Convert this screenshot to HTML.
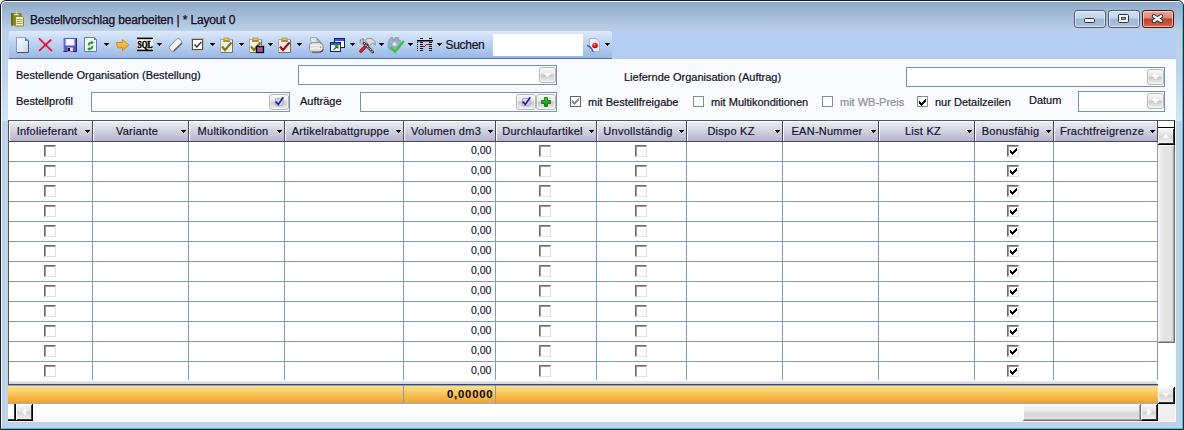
<!DOCTYPE html>
<html><head><meta charset="utf-8">
<style>
*{box-sizing:border-box;margin:0;padding:0}
html,body{width:1184px;height:430px;overflow:hidden;background:#fff;font-family:"Liberation Sans",sans-serif}
.a{position:absolute}
#win{position:absolute;left:0;top:0;width:1184px;height:430px;border:1px solid #1e1e1e;border-radius:6px 6px 0 0;
 background:linear-gradient(#8eaaca 0px,#a4bcd8 15px,#bcd1e8 30px,#bcd3ea 60px,#bcd3ea 430px);overflow:hidden}
#inhl{position:absolute;left:0;top:0;width:1182px;height:428px;border-left:1px solid #eef4fa;border-top:1px solid #eef4fa;border-right:1px solid #22d0f0;border-bottom:1px solid #22d0f0;border-radius:5px 5px 0 0}
.title{position:absolute;left:30px;top:13px;font-size:12px;letter-spacing:-0.15px;color:#100a20;white-space:nowrap;-webkit-text-stroke:0.25px #100a20}
.cbtn{position:absolute;top:10px;width:32px;height:18px;border:1px solid #52607a;border-radius:3px;
 background:linear-gradient(#cfdff0 0,#c3d5ea 7px,#9fb8d4 8px,#a9c0da 17px);box-shadow:inset 0 0 0 1px rgba(255,255,255,.55)}
.cbtn.close{border-color:#4a1414;background:linear-gradient(#e8a898 0,#d98a76 7px,#c0402a 8px,#cf6a52 17px)}
#tbar{position:absolute;left:8px;top:31px;width:605px;height:28px;border-radius:3px 4px 2px 2px;
 background:linear-gradient(#dde9fb 0,#cadcf6 7px,#adc7ec 19px,#9cbae6 26px);border-bottom:1px solid #4a70b8;border-left:1px solid #c4d6f2}
#rebar{position:absolute;left:612px;top:31px;width:564px;height:28px;background:#b3cdf3}
#form{position:absolute;left:8px;top:59px;width:1168px;height:363px;background:#f9fafd}
.lbl{position:absolute;font-size:11px;color:#10101e;white-space:nowrap;line-height:13px;-webkit-text-stroke:0.2px #10101e}
.box{position:absolute;border:1px solid #7592b4;background:#fff}
.gbtn{position:absolute;border:1px solid #b4b4b4;border-radius:3px;background:linear-gradient(#fafafa 0,#e6e6e6 42%,#c9c9c9 50%,#d9d9d9 72%,#f0f0f0 100%);box-shadow:inset 0 0 0 1px rgba(255,255,255,.6)}
.tri{position:absolute;width:0;height:0;border-left:4px solid transparent;border-right:4px solid transparent;border-top:4px solid #fff}
.dd{position:absolute;top:43px;width:0;height:0;border-left:3px solid transparent;border-right:3px solid transparent;border-top:3px solid #000}
.chk{position:absolute;width:11px;height:11px;border:1px solid #8a8a8a;background:#fff}
#grid{position:absolute;left:8px;top:120px;width:1150px;height:265px;background:#fff}
.hd{position:absolute;top:120px;height:22px;border-top:1px solid #555;border-bottom:1px solid #464462;
 background:linear-gradient(#ffffff 0,#ffffff 1px,#ececf2 1px,#b4b3cc 100%);box-shadow:inset 1px 0 0 #fff;font-size:11px;letter-spacing:0.25px;color:#121230;-webkit-text-stroke:0.2px #121230;line-height:21px;white-space:nowrap;overflow:hidden}
.hd span{position:absolute;top:0}
.hdd{position:absolute;top:9px;width:0;height:0;border-left:3px solid transparent;border-right:3px solid transparent;border-top:3px solid #000}
.vl{position:absolute;top:142px;width:1px;height:238px;background:#7d9cbe}
.hl{position:absolute;left:9px;width:1148px;height:1px;background:#7d9cbe}
.cb{position:absolute;width:12px;height:12px;border-top:1px solid #6b6b6b;border-left:1px solid #6b6b6b;border-right:1px solid #e0e0e0;border-bottom:1px solid #e0e0e0;box-shadow:inset 1px 1px 0 #9a9a9a;background:#fff}
.num{position:absolute;font-size:10.5px;color:#0a0a18;line-height:12px;-webkit-text-stroke:0.1px #0a0a18}
</style></head><body>
<div id="win"><div id="inhl"></div></div>
<svg class="a" style="left:8px;top:8px" width="22" height="22" viewBox="8 8 22 22">
 <rect x="11" y="13" width="10.5" height="12.5" fill="#87861a"/>
 <rect x="11" y="13" width="2" height="12.5" fill="#6a6810"/>
 <path d="M15.5 16.5 H22.5 L23.5 17.5 V26 H15.5 Z" fill="#f6f2cc" stroke="#8c8828"/>
 <rect x="16.5" y="19" width="6" height="1" fill="#a8a440"/><rect x="16.5" y="21" width="6" height="1" fill="#a8a440"/><rect x="16.5" y="23" width="6" height="1" fill="#a8a440"/>
 <rect x="16" y="11" width="1.2" height="3" fill="#d8d49a"/><rect x="14" y="14" width="5" height="1.2" fill="#e6e2b0"/>
</svg>
<div class="title">Bestellvorschlag bearbeiten | * Layout 0</div>
<div class="cbtn" style="left:1074px"></div><div class="cbtn" style="left:1108px"></div><div class="cbtn close" style="left:1142px"></div>
<svg class="a" style="left:1070px;top:6px" width="110" height="26" viewBox="1070 6 110 26">
<rect x="1084.5" y="18.5" width="10" height="4" rx="1.2" fill="#f4f4f4" stroke="#2c3444"/>
<rect x="1118.5" y="14.5" width="10" height="8" rx="1" fill="#f4f4f4" stroke="#2c3444"/>
<rect x="1121.5" y="17.5" width="4" height="2" fill="#8ea6c4" stroke="#2c3444" stroke-width="0.8"/>
<path d="M1154 16.2 L1161 21 M1161 16.2 L1154 21" stroke="#2e2a3a" stroke-width="4.4" stroke-linecap="round"/>
<path d="M1154 16.2 L1161 21 M1161 16.2 L1154 21" stroke="#f6f6f6" stroke-width="2.6" stroke-linecap="round"/>
</svg>
<div id="tbar"></div><div id="rebar"></div><div id="form"></div>
<div class="a" style="left:2px;top:68px;width:6px;height:53px;background:linear-gradient(rgba(212,227,243,0),#d6e5f4)"></div><div class="a" style="left:1176px;top:68px;width:6px;height:53px;background:linear-gradient(rgba(212,227,243,0),#d6e5f4)"></div>
<svg class="a" style="left:0;top:0" width="620" height="60" viewBox="0 0 620 60" shape-rendering="geometricPrecision">
<defs>
<linearGradient id="gpage" x1="0" y1="0" x2="1" y2="1"><stop offset="0" stop-color="#ffffff"/><stop offset="1" stop-color="#c8d4f0"/></linearGradient>
<linearGradient id="gorange" x1="0" y1="0" x2="0" y2="1"><stop offset="0" stop-color="#ffd27a"/><stop offset="1" stop-color="#f09a18"/></linearGradient>
<radialGradient id="gball" cx="0.4" cy="0.35" r="0.6"><stop offset="0" stop-color="#ffb0b0"/><stop offset="0.4" stop-color="#ff2020"/><stop offset="1" stop-color="#b00000"/></radialGradient>
<linearGradient id="gprint" x1="0" y1="0" x2="0" y2="1"><stop offset="0" stop-color="#f4f4f4"/><stop offset="1" stop-color="#9a9a9a"/></linearGradient>
</defs>
<path d="M16.5 37.5 H25.5 L28.5 40.5 V52.5 H16.5 Z" fill="url(#gpage)" stroke="#8b9cc4"/>
<path d="M28.5 40.5 V52.5 H17" fill="none" stroke="#505050"/>
<path d="M25 37.5 L28.5 41 H25 Z" fill="#3c8ce8"/>
<path d="M39.5 38.8 L51.5 50.6 M50.8 40 L39.6 50.4" stroke="#e41432" stroke-width="1.8" stroke-linecap="round"/>
<rect x="63" y="38" width="14" height="14" fill="#5656cc"/>
<rect x="63" y="38" width="1.2" height="14" fill="#9a9ae8"/>
<path d="M76.5 38 V51.5 H63.5" fill="none" stroke="#24247a"/>
<rect x="65.5" y="39" width="9" height="6.5" fill="#f4f4f4"/><rect x="66" y="39.5" width="6" height="3" fill="#ffffff"/>
<rect x="67" y="47.5" width="6" height="4" fill="#dcdcf0"/><rect x="67.5" y="48" width="2.5" height="3" fill="#101010"/>
<path d="M84.5 37.5 H94.5 L96.5 39.5 V51.5 H84.5 Z" fill="#f4f6fc" stroke="#6c78b0"/>
<path d="M94 37.5 L96.5 40 H94 Z" fill="#4080e0"/>
<path d="M87.8 45.5 C87.6 42.8 89.2 41.6 91.4 41.8 V40.4 L93.8 42.6 L91.4 44.8 V43.6 C90.2 43.5 89.6 44.3 89.7 45.5 Z" fill="#10a020"/>
<path d="M93.2 46 C93.4 48.7 91.8 49.9 89.6 49.7 V51.1 L87.2 48.9 L89.6 46.7 V47.9 C90.8 48 91.4 47.2 91.3 46 Z" fill="#10a020"/>
<rect x="104" y="43" width="5" height="1" fill="#000"/><rect x="105" y="44" width="3" height="1" fill="#000"/><rect x="106" y="45" width="1" height="1" fill="#000"/>
<path d="M116.5 42.5 H122.5 V39.5 L128.8 45 L122.5 50.8 V47.8 H117.5 Z" fill="url(#gorange)" stroke="#d8890c" stroke-width="1"/>
<rect x="137" y="38" width="16" height="13" fill="#fff"/>
<rect x="137" y="37.6" width="16" height="1.6" fill="#000"/><rect x="137" y="49.6" width="16" height="1.6" fill="#000"/>
<text x="145" y="48" text-anchor="middle" font-family="Liberation Serif" font-weight="bold" font-size="9.5" textLength="15" lengthAdjust="spacingAndGlyphs" fill="#000" stroke="#000" stroke-width="0.6">SQL</text>
<rect x="157" y="43" width="5" height="1" fill="#000"/><rect x="158" y="44" width="3" height="1" fill="#000"/><rect x="159" y="45" width="1" height="1" fill="#000"/>
<g transform="rotate(-45 175.6 45)"><rect x="168.6" y="41.6" width="14" height="7" rx="2.5" fill="#f4f4f4" stroke="#8c8c8c" stroke-width="0.9"/><path d="M170 48 H181.5" stroke="#5c5c5c" stroke-width="1.3"/><path d="M170.5 41.8 H176" stroke="#4a86f0" stroke-width="0.9"/></g>
<rect x="191.5" y="38.5" width="12" height="12" fill="#fff" stroke="#b8b8b8"/>
<rect x="192.5" y="39.5" width="10" height="10" fill="#fff" stroke="#505050"/>
<path d="M194.5 44.5 L196.8 47 L201.3 42" fill="none" stroke="#303030" stroke-width="1.4"/>
<rect x="210" y="43" width="5" height="1" fill="#000"/><rect x="211" y="44" width="3" height="1" fill="#000"/><rect x="212" y="45" width="1" height="1" fill="#000"/>
<rect x="220.5" y="39.5" width="12" height="13" fill="#f4f2e6" stroke="#a8a8a0"/><path d="M221 52.5 H232.5 V40" fill="none" stroke="#707070"/><rect x="224" y="38" width="5" height="3" fill="#f0c050" stroke="#a88020" stroke-width="0.6"/><rect x="223" y="40.6" width="7" height="1" fill="#6a6a40"/><path d="M222 46.5 L225 50 L231.5 42.5" fill="none" stroke="#7a7a10" stroke-width="2.2"/>
<rect x="239" y="43" width="5" height="1" fill="#000"/><rect x="240" y="44" width="3" height="1" fill="#000"/><rect x="241" y="45" width="1" height="1" fill="#000"/>
<rect x="249.5" y="39.5" width="12" height="13" fill="#f4f2e6" stroke="#a8a8a0"/><path d="M250 52.5 H261.5 V40" fill="none" stroke="#707070"/><rect x="253" y="38" width="5" height="3" fill="#f0c050" stroke="#a88020" stroke-width="0.6"/><rect x="252" y="40.6" width="7" height="1" fill="#6a6a40"/><path d="M251 46.5 L254 50 L260.5 42.5" fill="none" stroke="#7a7a10" stroke-width="2.2"/>
<rect x="256.5" y="46.5" width="7" height="6" fill="#b050a8" stroke="#000" stroke-width="1.3"/>
<rect x="268" y="43" width="5" height="1" fill="#000"/><rect x="269" y="44" width="3" height="1" fill="#000"/><rect x="270" y="45" width="1" height="1" fill="#000"/>
<rect x="278.5" y="39.5" width="12" height="13" fill="#f8e8e8" stroke="#a8a8a0"/><path d="M279 52.5 H290.5 V40" fill="none" stroke="#707070"/><rect x="282" y="38" width="5" height="3" fill="#f0c050" stroke="#a88020" stroke-width="0.6"/><rect x="281" y="40.6" width="7" height="1" fill="#6a6a40"/><path d="M280 46.5 L283 50 L289.5 42.5" fill="none" stroke="#901818" stroke-width="2.2"/>
<rect x="297" y="43" width="5" height="1" fill="#000"/><rect x="298" y="44" width="3" height="1" fill="#000"/><rect x="299" y="45" width="1" height="1" fill="#000"/>
<path d="M310.5 37.5 H316.5 L317.5 43 H311 Z" fill="#d6e6fa" stroke="#a0a4b0" stroke-width="0.9"/>
<path d="M317 38.5 L322.5 44.5" stroke="#5a5e66" stroke-width="1"/>
<path d="M309.5 45 Q310.5 42.5 313 42.5 H319.5 Q322.8 43.5 323.2 46.5 V49.5 Q322.5 52.8 318.5 52.8 H313.5 Q309.6 52 309.5 49.5 Z" fill="#dcdcdc" stroke="#8a8a8a" stroke-width="0.9"/>
<path d="M310.5 45.5 Q316 44.2 322 46" fill="none" stroke="#ffffff" stroke-width="1"/><path d="M310.5 48.5 Q316 47.2 322.5 49" fill="none" stroke="#fafafa" stroke-width="0.9"/>
<path d="M312 52 H320 Q322.5 51.5 323 49.5" fill="none" stroke="#3c3c3c" stroke-width="1.2"/>
<rect x="320" y="46.5" width="1.2" height="1.2" fill="#40b040"/>
<rect x="334.5" y="38.5" width="10" height="9" fill="#f8f8f8" stroke="#1c1c6c"/>
<rect x="335" y="39" width="9" height="2" fill="#3058d8"/>
<rect x="330.5" y="42.5" width="10" height="9" fill="#fbfbfb" stroke="#1c1c6c"/>
<rect x="331" y="43" width="9" height="2" fill="#3058d8"/>
<path d="M333.5 50 L337.5 46 M335 46 H337.8 V48.8" fill="none" stroke="#188018" stroke-width="1.3"/>
<rect x="350" y="43" width="5" height="1" fill="#000"/><rect x="351" y="44" width="3" height="1" fill="#000"/><rect x="352" y="45" width="1" height="1" fill="#000"/>
<path d="M365 40.5 L368 38.2 Q372.5 37.6 375 41.5 L375.5 44.8 L372.5 43.2 L369.5 45.5 Z" fill="#dadada" stroke="#808080" stroke-width="0.8"/>
<path d="M360.8 51.2 L367 45" stroke="#8a0a10" stroke-width="3.2" stroke-linecap="round"/>
<path d="M360.8 51.2 L367 45" stroke="#e4202a" stroke-width="1.8" stroke-linecap="round"/>
<path d="M360.2 40 Q359.4 43 361.8 44.2 Q363.5 44.8 365 43.5 L363.2 41.6 L364 39 Q361.8 38.6 360.2 40 Z" fill="#c8c8c8" stroke="#707070" stroke-width="0.7"/>
<path d="M364 43.2 L372.8 52" stroke="#3c3c3c" stroke-width="2.6" stroke-linecap="round"/>
<path d="M364 43.2 L372.8 52" stroke="#f0f0f0" stroke-width="1.1" stroke-dasharray="1.1 1.1"/>
<rect x="379" y="43" width="5" height="1" fill="#000"/><rect x="380" y="44" width="3" height="1" fill="#000"/><rect x="381" y="45" width="1" height="1" fill="#000"/>
<path d="M390.5 37.5 H393 V38.8 H395.5 V37.5 H398.5 V40 H400.5 V47 H399 V49.5 H396 V50.5 H391 V49.5 H389 V47.5 H388 V41.5 H389 V39.5 H390.5 Z" fill="#96abc4" stroke="#8198b4" stroke-width="0.6"/>
<path d="M389 42 H400" stroke="#a8bcd2" stroke-width="1"/>
<circle cx="394.6" cy="44.2" r="1.9" fill="#dfe8f2"/>
<path d="M390.8 47.2 L395 51.8 L403.8 41" fill="none" stroke="#36c336" stroke-width="2.1"/>
<rect x="408" y="43" width="5" height="1" fill="#000"/><rect x="409" y="44" width="3" height="1" fill="#000"/><rect x="410" y="45" width="1" height="1" fill="#000"/>
<rect x="417" y="40" width="16" height="1.5" fill="#000"/>
<rect x="420" y="38" width="3" height="1" fill="#000"/><rect x="429" y="38" width="3" height="1" fill="#000"/>
<rect x="417" y="42" width="1" height="1" fill="#000"/><rect x="420" y="42" width="3" height="1" fill="#000"/><rect x="429" y="42" width="3" height="1" fill="#000"/>
<rect x="417" y="44" width="1" height="1" fill="#000"/><rect x="420" y="44" width="3" height="1" fill="#000"/><rect x="429" y="44" width="3" height="1" fill="#000"/>
<rect x="417" y="46" width="1" height="1" fill="#000"/><rect x="420" y="46" width="3" height="1" fill="#000"/><rect x="429" y="46" width="3" height="1" fill="#000"/>
<rect x="417" y="48" width="1" height="1" fill="#000"/><rect x="420" y="48" width="3" height="1" fill="#000"/><rect x="429" y="48" width="3" height="1" fill="#000"/>
<rect x="417" y="50" width="1" height="1" fill="#000"/><rect x="420" y="50" width="3" height="1" fill="#000"/><rect x="429" y="50" width="3" height="1" fill="#000"/>
<rect x="423" y="46" width="2" height="1" fill="#e00000"/><rect x="425" y="45" width="1" height="1" fill="#e00000"/><rect x="426" y="44" width="3" height="1" fill="#e00000"/>
<rect x="437" y="43" width="5" height="1" fill="#000"/><rect x="438" y="44" width="3" height="1" fill="#000"/><rect x="439" y="45" width="1" height="1" fill="#000"/>
<path d="M589.5 38.5 H596 L599.5 42 V51.5 H589.5 Z" fill="#eef0f6" stroke="#a8b0c8"/>
<path d="M587 45.5 Q591 46 593 51.8" fill="none" stroke="#2a60d8" stroke-width="1.6"/>
<circle cx="595" cy="45.5" r="2.8" fill="url(#gball)"/>
<rect x="605" y="43" width="5" height="1" fill="#000"/><rect x="606" y="44" width="3" height="1" fill="#000"/><rect x="607" y="45" width="1" height="1" fill="#000"/>
</svg>
<div class="lbl" style="left:445.5px;top:39px;font-size:12px;letter-spacing:-0.3px">Suchen</div>
<div class="a" style="left:493px;top:34px;width:90px;height:22px;background:#fff"></div>
<div class="lbl" style="left:16px;top:69px">Bestellende Organisation (Bestellung)</div>
<div class="box" style="left:298px;top:65px;width:259px;height:20px"></div>
<div class="gbtn" style="left:539px;top:67px;width:17px;height:16px"></div>
<div class="lbl" style="left:624px;top:71px">Liefernde Organisation (Auftrag)</div>
<div class="box" style="left:906px;top:67px;width:259px;height:20px"></div>
<div class="gbtn" style="left:1147px;top:69px;width:17px;height:16px"></div>
<div class="lbl" style="left:16px;top:95px">Bestellprofil</div>
<div class="box" style="left:91px;top:92px;width:199px;height:20px"></div>
<div class="gbtn" style="left:269px;top:94px;width:20px;height:16px"></div>
<div class="lbl" style="left:300px;top:95px">Aufträge</div>
<div class="box" style="left:360px;top:92px;width:197px;height:20px"></div>
<div class="gbtn" style="left:516px;top:94px;width:20px;height:16px"></div>
<div class="gbtn" style="left:536px;top:94px;width:20px;height:16px"></div>
<div class="chk" style="left:570px;top:96px;border-color:#646464"></div>
<div class="lbl" style="left:588px;top:96px">mit Bestellfreigabe</div>
<div class="chk" style="left:693px;top:96px"></div>
<div class="lbl" style="left:711px;top:96px">mit Multikonditionen</div>
<div class="chk" style="left:822px;top:96px"></div>
<div class="lbl" style="left:840px;top:96px;color:#8d8d8d;-webkit-text-stroke:0.2px #8d8d8d">mit WB-Preis</div>
<div class="chk" style="left:917px;top:96px"></div>
<div class="lbl" style="left:935px;top:96px">nur Detailzeilen</div>
<div class="lbl" style="left:1029px;top:94px">Datum</div>
<div class="box" style="left:1078px;top:91px;width:87px;height:21px"></div>
<div class="gbtn" style="left:1147px;top:93px;width:17px;height:16px"></div>
<svg class="a" style="left:0;top:60px" width="1184" height="60" viewBox="0 60 1184 60">
<defs><linearGradient id="gplus" x1="0" y1="0" x2="0" y2="1"><stop offset="0" stop-color="#40c840"/><stop offset="1" stop-color="#108a10"/></linearGradient></defs>
<path d="M543.5 73 H551.5 L547.5 77.3 Z" fill="#ffffff"/>
<path d="M1151.5 75 H1159.5 L1155.5 79.3 Z" fill="#ffffff"/>
<path d="M1151.5 99 H1159.5 L1155.5 103.3 Z" fill="#ffffff"/>
<rect x="275.5" y="98.3" width="7.5" height="7.5" rx="1" fill="#d4d4ea" stroke="#9a9ac8" stroke-width="0.8"/>
<path d="M275.6 101.5 L278.3 104.4 L283.3 97.3" fill="none" stroke="#1c1c98" stroke-width="1.6"/>
<rect x="522.5" y="98.3" width="7.5" height="7.5" rx="1" fill="#d4d4ea" stroke="#9a9ac8" stroke-width="0.8"/>
<path d="M522.6 101.5 L525.3 104.4 L530.3 97.3" fill="none" stroke="#1c1c98" stroke-width="1.6"/>
<path d="M544.5 97.5 H547.5 V100.5 H550.5 V103.5 H547.5 V106.5 H544.5 V103.5 H541.5 V100.5 H544.5 Z" fill="url(#gplus)" stroke="#0c700c" stroke-width="0.8"/>

</svg>
<div id="grid"></div>
<div class="a" style="left:8px;top:120px;width:1px;height:264px;background:#555"></div>
<div class="hd" style="left:9px;width:84px;border-right:1px solid #464462"><span style="left:0;width:76px;text-align:center">Infolieferant</span><svg class="a" style="left:76px;top:9px" width="5" height="3"><rect x="0" y="0" width="5" height="1"/><rect x="1" y="1" width="3" height="1"/><rect x="2" y="2" width="1" height="1"/></svg></div>
<div class="hd" style="left:93px;width:96px;border-right:1px solid #464462"><span style="left:0;width:88px;text-align:center">Variante</span><svg class="a" style="left:88px;top:9px" width="5" height="3"><rect x="0" y="0" width="5" height="1"/><rect x="1" y="1" width="3" height="1"/><rect x="2" y="2" width="1" height="1"/></svg></div>
<div class="hd" style="left:189px;width:96px;border-right:1px solid #464462"><span style="left:0;width:88px;text-align:center">Multikondition</span><svg class="a" style="left:88px;top:9px" width="5" height="3"><rect x="0" y="0" width="5" height="1"/><rect x="1" y="1" width="3" height="1"/><rect x="2" y="2" width="1" height="1"/></svg></div>
<div class="hd" style="left:285px;width:119px;border-right:1px solid #464462"><span style="left:0;width:111px;text-align:center">Artikelrabattgruppe</span><svg class="a" style="left:111px;top:9px" width="5" height="3"><rect x="0" y="0" width="5" height="1"/><rect x="1" y="1" width="3" height="1"/><rect x="2" y="2" width="1" height="1"/></svg></div>
<div class="hd" style="left:404px;width:92px;border-right:1px solid #464462"><span style="left:0;width:84px;text-align:center">Volumen dm3</span><svg class="a" style="left:84px;top:9px" width="5" height="3"><rect x="0" y="0" width="5" height="1"/><rect x="1" y="1" width="3" height="1"/><rect x="2" y="2" width="1" height="1"/></svg></div>
<div class="hd" style="left:496px;width:101px;border-right:1px solid #464462"><span style="left:0;width:93px;text-align:center">Durchlaufartikel</span><svg class="a" style="left:93px;top:9px" width="5" height="3"><rect x="0" y="0" width="5" height="1"/><rect x="1" y="1" width="3" height="1"/><rect x="2" y="2" width="1" height="1"/></svg></div>
<div class="hd" style="left:597px;width:90px;border-right:1px solid #464462"><span style="left:0;width:82px;text-align:center">Unvollständig</span><svg class="a" style="left:82px;top:9px" width="5" height="3"><rect x="0" y="0" width="5" height="1"/><rect x="1" y="1" width="3" height="1"/><rect x="2" y="2" width="1" height="1"/></svg></div>
<div class="hd" style="left:687px;width:96px;border-right:1px solid #464462"><span style="left:0;width:88px;text-align:center">Dispo KZ</span><svg class="a" style="left:88px;top:9px" width="5" height="3"><rect x="0" y="0" width="5" height="1"/><rect x="1" y="1" width="3" height="1"/><rect x="2" y="2" width="1" height="1"/></svg></div>
<div class="hd" style="left:783px;width:96px;border-right:1px solid #464462"><span style="left:0;width:88px;text-align:center">EAN-Nummer</span><svg class="a" style="left:88px;top:9px" width="5" height="3"><rect x="0" y="0" width="5" height="1"/><rect x="1" y="1" width="3" height="1"/><rect x="2" y="2" width="1" height="1"/></svg></div>
<div class="hd" style="left:879px;width:96px;border-right:1px solid #464462"><span style="left:0;width:88px;text-align:center">List KZ</span><svg class="a" style="left:88px;top:9px" width="5" height="3"><rect x="0" y="0" width="5" height="1"/><rect x="1" y="1" width="3" height="1"/><rect x="2" y="2" width="1" height="1"/></svg></div>
<div class="hd" style="left:975px;width:79px;border-right:1px solid #464462"><span style="left:0;width:71px;text-align:center">Bonusfähig</span><svg class="a" style="left:71px;top:9px" width="5" height="3"><rect x="0" y="0" width="5" height="1"/><rect x="1" y="1" width="3" height="1"/><rect x="2" y="2" width="1" height="1"/></svg></div>
<div class="hd" style="left:1054px;width:104px;border-right:1px solid #464462"><span style="left:0;width:96px;text-align:center">Frachtfreigrenze</span><svg class="a" style="left:96px;top:9px" width="5" height="3"><rect x="0" y="0" width="5" height="1"/><rect x="1" y="1" width="3" height="1"/><rect x="2" y="2" width="1" height="1"/></svg></div>
<div class="vl" style="left:92px"></div>
<div class="vl" style="left:188px"></div>
<div class="vl" style="left:284px"></div>
<div class="vl" style="left:403px"></div>
<div class="vl" style="left:495px"></div>
<div class="vl" style="left:596px"></div>
<div class="vl" style="left:686px"></div>
<div class="vl" style="left:782px"></div>
<div class="vl" style="left:878px"></div>
<div class="vl" style="left:974px"></div>
<div class="vl" style="left:1053px"></div>
<div class="vl" style="left:1157px"></div>
<div class="hl" style="top:161px"></div>
<div class="cb" style="left:44px;top:145px"></div>
<div class="cb" style="left:539px;top:145px"></div>
<div class="cb" style="left:635px;top:145px"></div>
<div class="cb" style="left:1007px;top:145px"></div>
<div class="num" style="left:471px;top:144px">0,00</div>
<div class="hl" style="top:181px"></div>
<div class="cb" style="left:44px;top:165px"></div>
<div class="cb" style="left:539px;top:165px"></div>
<div class="cb" style="left:635px;top:165px"></div>
<div class="cb" style="left:1007px;top:165px"></div>
<div class="num" style="left:471px;top:164px">0,00</div>
<div class="hl" style="top:201px"></div>
<div class="cb" style="left:44px;top:185px"></div>
<div class="cb" style="left:539px;top:185px"></div>
<div class="cb" style="left:635px;top:185px"></div>
<div class="cb" style="left:1007px;top:185px"></div>
<div class="num" style="left:471px;top:184px">0,00</div>
<div class="hl" style="top:221px"></div>
<div class="cb" style="left:44px;top:205px"></div>
<div class="cb" style="left:539px;top:205px"></div>
<div class="cb" style="left:635px;top:205px"></div>
<div class="cb" style="left:1007px;top:205px"></div>
<div class="num" style="left:471px;top:204px">0,00</div>
<div class="hl" style="top:241px"></div>
<div class="cb" style="left:44px;top:225px"></div>
<div class="cb" style="left:539px;top:225px"></div>
<div class="cb" style="left:635px;top:225px"></div>
<div class="cb" style="left:1007px;top:225px"></div>
<div class="num" style="left:471px;top:224px">0,00</div>
<div class="hl" style="top:261px"></div>
<div class="cb" style="left:44px;top:245px"></div>
<div class="cb" style="left:539px;top:245px"></div>
<div class="cb" style="left:635px;top:245px"></div>
<div class="cb" style="left:1007px;top:245px"></div>
<div class="num" style="left:471px;top:244px">0,00</div>
<div class="hl" style="top:281px"></div>
<div class="cb" style="left:44px;top:265px"></div>
<div class="cb" style="left:539px;top:265px"></div>
<div class="cb" style="left:635px;top:265px"></div>
<div class="cb" style="left:1007px;top:265px"></div>
<div class="num" style="left:471px;top:264px">0,00</div>
<div class="hl" style="top:301px"></div>
<div class="cb" style="left:44px;top:285px"></div>
<div class="cb" style="left:539px;top:285px"></div>
<div class="cb" style="left:635px;top:285px"></div>
<div class="cb" style="left:1007px;top:285px"></div>
<div class="num" style="left:471px;top:284px">0,00</div>
<div class="hl" style="top:321px"></div>
<div class="cb" style="left:44px;top:305px"></div>
<div class="cb" style="left:539px;top:305px"></div>
<div class="cb" style="left:635px;top:305px"></div>
<div class="cb" style="left:1007px;top:305px"></div>
<div class="num" style="left:471px;top:304px">0,00</div>
<div class="hl" style="top:341px"></div>
<div class="cb" style="left:44px;top:325px"></div>
<div class="cb" style="left:539px;top:325px"></div>
<div class="cb" style="left:635px;top:325px"></div>
<div class="cb" style="left:1007px;top:325px"></div>
<div class="num" style="left:471px;top:324px">0,00</div>
<div class="hl" style="top:361px"></div>
<div class="cb" style="left:44px;top:345px"></div>
<div class="cb" style="left:539px;top:345px"></div>
<div class="cb" style="left:635px;top:345px"></div>
<div class="cb" style="left:1007px;top:345px"></div>
<div class="num" style="left:471px;top:344px">0,00</div>
<div class="hl" style="top:381px"></div>
<div class="cb" style="left:44px;top:365px"></div>
<div class="cb" style="left:539px;top:365px"></div>
<div class="cb" style="left:635px;top:365px"></div>
<div class="cb" style="left:1007px;top:365px"></div>
<div class="num" style="left:471px;top:364px">0,00</div>
<div class="a" style="left:9px;top:381px;width:1148px;height:3px;background:linear-gradient(#ebebf2,#d0cfdc)"></div>
<div class="a" style="left:8px;top:384px;width:1150px;height:1px;background:#464462"></div>
<div class="a" style="left:8px;top:385px;width:1150px;height:1px;background:#8aa2c0"></div><div class="a" style="left:8px;top:386px;width:1150px;height:17px;background:linear-gradient(#fde28c,#f3a125)"></div>
<div class="a" style="left:403px;top:385px;width:1px;height:18px;background:#7d9cbe"></div>
<div class="a" style="left:495px;top:385px;width:1px;height:18px;background:#7d9cbe"></div>
<div class="a" style="left:8px;top:403px;width:1150px;height:1px;background:#8eaedc"></div>
<div class="lbl" style="left:447px;top:388px;font-weight:bold;font-size:11.3px;letter-spacing:0.8px;-webkit-text-stroke:0.15px #10101e">0,00000</div>
<div class="a" style="left:1158px;top:121px;width:17px;height:300px;background:#fff"></div>
<div class="a" style="left:1157px;top:120px;width:18px;height:1px;background:#555"></div>
<div class="a" style="left:1158px;top:121px;width:17px;height:7px;background:#fff;border-right:1px solid #000;border-bottom:1px solid #000"></div>
<div class="a" style="left:1158px;top:128px;width:17px;height:17px;background:linear-gradient(#f8f8f8 0,#e6e6e6 40%,#d4d4d4 55%,#e8e8e8 80%,#f4f4f4 100%);border-right:1px solid #000;border-bottom:1px solid #000;box-shadow:inset 1px 1px 0 #fff,inset -1px -1px 0 #3a3a3a"></div><svg class="a" style="left:0;top:0" width="1184" height="430"><path d="M1162.5 138.0 H1169.5 L1166.0 134.0 Z" fill="#fff"/></svg>
<div class="a" style="left:1158px;top:145px;width:17px;height:198px;background:linear-gradient(90deg,#f4f4f4,#e2e2e2 40%,#e2e2e2 80%,#d0d0d0);border-right:1px solid #6e6e6e;border-bottom:1px solid #6e6e6e;box-shadow:inset 1px 1px 0 #fff,inset -1px -1px 0 #a8a8a8"></div>
<div class="a" style="left:1158px;top:387px;width:17px;height:17px;background:linear-gradient(#f8f8f8 0,#e6e6e6 40%,#d4d4d4 55%,#e8e8e8 80%,#f4f4f4 100%);border-right:1px solid #000;border-bottom:1px solid #000;box-shadow:inset 1px 1px 0 #fff,inset -1px -1px 0 #3a3a3a"></div><svg class="a" style="left:0;top:0" width="1184" height="430"><path d="M1162.5 393.0 H1169.5 L1166.0 397.0 Z" fill="#fff"/></svg>
<div class="a" style="left:1158px;top:404px;width:17px;height:17px;background:#efefef"></div>
<div class="a" style="left:8px;top:403px;width:1150px;height:18px;background:#fff"></div>
<div class="a" style="left:1023px;top:404px;width:118px;height:17px;background:linear-gradient(#fafafa 0,#ececec 40%,#d6d6d6 60%,#e4e4e4 100%);border-right:1px solid #6e6e6e;border-bottom:1px solid #6e6e6e;box-shadow:inset 1px 1px 0 #fff,inset -1px -1px 0 #a8a8a8"></div>
<div class="a" style="left:1141px;top:404px;width:17px;height:17px;background:linear-gradient(#f8f8f8 0,#e6e6e6 40%,#d4d4d4 55%,#e8e8e8 80%,#f4f4f4 100%);border-right:1px solid #000;border-bottom:1px solid #000;box-shadow:inset 1px 1px 0 #fff,inset -1px -1px 0 #3a3a3a"></div><svg class="a" style="left:0;top:0" width="1184" height="430"><path d="M1147.5 408.0 V416.0 L1151.5 412.0 Z" fill="#fff"/></svg>
<div class="a" style="left:16px;top:404px;width:17px;height:17px;background:linear-gradient(#f8f8f8 0,#e6e6e6 40%,#d4d4d4 55%,#e8e8e8 80%,#f4f4f4 100%);border-right:1px solid #000;border-bottom:1px solid #000;box-shadow:inset 1px 1px 0 #fff,inset -1px -1px 0 #3a3a3a"></div><svg class="a" style="left:0;top:0" width="1184" height="430"><path d="M26.0 408.0 V416.0 L22.0 412.0 Z" fill="#fff"/></svg>
<div class="a" style="left:8px;top:404px;width:8px;height:17px;background:#fff;border-right:1px solid #000;border-bottom:1px solid #000;box-shadow:inset -1px -1px 0 #3a3a3a"></div>
<div class="a" style="left:8px;top:403px;width:1150px;height:1px;background:#8eaedc"></div>
<svg class="a" style="left:0;top:0" width="1184" height="430" shape-rendering="crispEdges"><rect x="1016" y="148" width="1" height="1"/><rect x="1015" y="149" width="1" height="1"/><rect x="1016" y="149" width="1" height="1"/><rect x="1010" y="150" width="1" height="1"/><rect x="1014" y="150" width="1" height="1"/><rect x="1015" y="150" width="1" height="1"/><rect x="1016" y="150" width="1" height="1"/><rect x="1010" y="151" width="1" height="1"/><rect x="1011" y="151" width="1" height="1"/><rect x="1013" y="151" width="1" height="1"/><rect x="1014" y="151" width="1" height="1"/><rect x="1015" y="151" width="1" height="1"/><rect x="1010" y="152" width="1" height="1"/><rect x="1011" y="152" width="1" height="1"/><rect x="1012" y="152" width="1" height="1"/><rect x="1013" y="152" width="1" height="1"/><rect x="1014" y="152" width="1" height="1"/><rect x="1011" y="153" width="1" height="1"/><rect x="1012" y="153" width="1" height="1"/><rect x="1013" y="153" width="1" height="1"/><rect x="1012" y="154" width="1" height="1"/><rect x="1016" y="168" width="1" height="1"/><rect x="1015" y="169" width="1" height="1"/><rect x="1016" y="169" width="1" height="1"/><rect x="1010" y="170" width="1" height="1"/><rect x="1014" y="170" width="1" height="1"/><rect x="1015" y="170" width="1" height="1"/><rect x="1016" y="170" width="1" height="1"/><rect x="1010" y="171" width="1" height="1"/><rect x="1011" y="171" width="1" height="1"/><rect x="1013" y="171" width="1" height="1"/><rect x="1014" y="171" width="1" height="1"/><rect x="1015" y="171" width="1" height="1"/><rect x="1010" y="172" width="1" height="1"/><rect x="1011" y="172" width="1" height="1"/><rect x="1012" y="172" width="1" height="1"/><rect x="1013" y="172" width="1" height="1"/><rect x="1014" y="172" width="1" height="1"/><rect x="1011" y="173" width="1" height="1"/><rect x="1012" y="173" width="1" height="1"/><rect x="1013" y="173" width="1" height="1"/><rect x="1012" y="174" width="1" height="1"/><rect x="1016" y="188" width="1" height="1"/><rect x="1015" y="189" width="1" height="1"/><rect x="1016" y="189" width="1" height="1"/><rect x="1010" y="190" width="1" height="1"/><rect x="1014" y="190" width="1" height="1"/><rect x="1015" y="190" width="1" height="1"/><rect x="1016" y="190" width="1" height="1"/><rect x="1010" y="191" width="1" height="1"/><rect x="1011" y="191" width="1" height="1"/><rect x="1013" y="191" width="1" height="1"/><rect x="1014" y="191" width="1" height="1"/><rect x="1015" y="191" width="1" height="1"/><rect x="1010" y="192" width="1" height="1"/><rect x="1011" y="192" width="1" height="1"/><rect x="1012" y="192" width="1" height="1"/><rect x="1013" y="192" width="1" height="1"/><rect x="1014" y="192" width="1" height="1"/><rect x="1011" y="193" width="1" height="1"/><rect x="1012" y="193" width="1" height="1"/><rect x="1013" y="193" width="1" height="1"/><rect x="1012" y="194" width="1" height="1"/><rect x="1016" y="208" width="1" height="1"/><rect x="1015" y="209" width="1" height="1"/><rect x="1016" y="209" width="1" height="1"/><rect x="1010" y="210" width="1" height="1"/><rect x="1014" y="210" width="1" height="1"/><rect x="1015" y="210" width="1" height="1"/><rect x="1016" y="210" width="1" height="1"/><rect x="1010" y="211" width="1" height="1"/><rect x="1011" y="211" width="1" height="1"/><rect x="1013" y="211" width="1" height="1"/><rect x="1014" y="211" width="1" height="1"/><rect x="1015" y="211" width="1" height="1"/><rect x="1010" y="212" width="1" height="1"/><rect x="1011" y="212" width="1" height="1"/><rect x="1012" y="212" width="1" height="1"/><rect x="1013" y="212" width="1" height="1"/><rect x="1014" y="212" width="1" height="1"/><rect x="1011" y="213" width="1" height="1"/><rect x="1012" y="213" width="1" height="1"/><rect x="1013" y="213" width="1" height="1"/><rect x="1012" y="214" width="1" height="1"/><rect x="1016" y="228" width="1" height="1"/><rect x="1015" y="229" width="1" height="1"/><rect x="1016" y="229" width="1" height="1"/><rect x="1010" y="230" width="1" height="1"/><rect x="1014" y="230" width="1" height="1"/><rect x="1015" y="230" width="1" height="1"/><rect x="1016" y="230" width="1" height="1"/><rect x="1010" y="231" width="1" height="1"/><rect x="1011" y="231" width="1" height="1"/><rect x="1013" y="231" width="1" height="1"/><rect x="1014" y="231" width="1" height="1"/><rect x="1015" y="231" width="1" height="1"/><rect x="1010" y="232" width="1" height="1"/><rect x="1011" y="232" width="1" height="1"/><rect x="1012" y="232" width="1" height="1"/><rect x="1013" y="232" width="1" height="1"/><rect x="1014" y="232" width="1" height="1"/><rect x="1011" y="233" width="1" height="1"/><rect x="1012" y="233" width="1" height="1"/><rect x="1013" y="233" width="1" height="1"/><rect x="1012" y="234" width="1" height="1"/><rect x="1016" y="248" width="1" height="1"/><rect x="1015" y="249" width="1" height="1"/><rect x="1016" y="249" width="1" height="1"/><rect x="1010" y="250" width="1" height="1"/><rect x="1014" y="250" width="1" height="1"/><rect x="1015" y="250" width="1" height="1"/><rect x="1016" y="250" width="1" height="1"/><rect x="1010" y="251" width="1" height="1"/><rect x="1011" y="251" width="1" height="1"/><rect x="1013" y="251" width="1" height="1"/><rect x="1014" y="251" width="1" height="1"/><rect x="1015" y="251" width="1" height="1"/><rect x="1010" y="252" width="1" height="1"/><rect x="1011" y="252" width="1" height="1"/><rect x="1012" y="252" width="1" height="1"/><rect x="1013" y="252" width="1" height="1"/><rect x="1014" y="252" width="1" height="1"/><rect x="1011" y="253" width="1" height="1"/><rect x="1012" y="253" width="1" height="1"/><rect x="1013" y="253" width="1" height="1"/><rect x="1012" y="254" width="1" height="1"/><rect x="1016" y="268" width="1" height="1"/><rect x="1015" y="269" width="1" height="1"/><rect x="1016" y="269" width="1" height="1"/><rect x="1010" y="270" width="1" height="1"/><rect x="1014" y="270" width="1" height="1"/><rect x="1015" y="270" width="1" height="1"/><rect x="1016" y="270" width="1" height="1"/><rect x="1010" y="271" width="1" height="1"/><rect x="1011" y="271" width="1" height="1"/><rect x="1013" y="271" width="1" height="1"/><rect x="1014" y="271" width="1" height="1"/><rect x="1015" y="271" width="1" height="1"/><rect x="1010" y="272" width="1" height="1"/><rect x="1011" y="272" width="1" height="1"/><rect x="1012" y="272" width="1" height="1"/><rect x="1013" y="272" width="1" height="1"/><rect x="1014" y="272" width="1" height="1"/><rect x="1011" y="273" width="1" height="1"/><rect x="1012" y="273" width="1" height="1"/><rect x="1013" y="273" width="1" height="1"/><rect x="1012" y="274" width="1" height="1"/><rect x="1016" y="288" width="1" height="1"/><rect x="1015" y="289" width="1" height="1"/><rect x="1016" y="289" width="1" height="1"/><rect x="1010" y="290" width="1" height="1"/><rect x="1014" y="290" width="1" height="1"/><rect x="1015" y="290" width="1" height="1"/><rect x="1016" y="290" width="1" height="1"/><rect x="1010" y="291" width="1" height="1"/><rect x="1011" y="291" width="1" height="1"/><rect x="1013" y="291" width="1" height="1"/><rect x="1014" y="291" width="1" height="1"/><rect x="1015" y="291" width="1" height="1"/><rect x="1010" y="292" width="1" height="1"/><rect x="1011" y="292" width="1" height="1"/><rect x="1012" y="292" width="1" height="1"/><rect x="1013" y="292" width="1" height="1"/><rect x="1014" y="292" width="1" height="1"/><rect x="1011" y="293" width="1" height="1"/><rect x="1012" y="293" width="1" height="1"/><rect x="1013" y="293" width="1" height="1"/><rect x="1012" y="294" width="1" height="1"/><rect x="1016" y="308" width="1" height="1"/><rect x="1015" y="309" width="1" height="1"/><rect x="1016" y="309" width="1" height="1"/><rect x="1010" y="310" width="1" height="1"/><rect x="1014" y="310" width="1" height="1"/><rect x="1015" y="310" width="1" height="1"/><rect x="1016" y="310" width="1" height="1"/><rect x="1010" y="311" width="1" height="1"/><rect x="1011" y="311" width="1" height="1"/><rect x="1013" y="311" width="1" height="1"/><rect x="1014" y="311" width="1" height="1"/><rect x="1015" y="311" width="1" height="1"/><rect x="1010" y="312" width="1" height="1"/><rect x="1011" y="312" width="1" height="1"/><rect x="1012" y="312" width="1" height="1"/><rect x="1013" y="312" width="1" height="1"/><rect x="1014" y="312" width="1" height="1"/><rect x="1011" y="313" width="1" height="1"/><rect x="1012" y="313" width="1" height="1"/><rect x="1013" y="313" width="1" height="1"/><rect x="1012" y="314" width="1" height="1"/><rect x="1016" y="328" width="1" height="1"/><rect x="1015" y="329" width="1" height="1"/><rect x="1016" y="329" width="1" height="1"/><rect x="1010" y="330" width="1" height="1"/><rect x="1014" y="330" width="1" height="1"/><rect x="1015" y="330" width="1" height="1"/><rect x="1016" y="330" width="1" height="1"/><rect x="1010" y="331" width="1" height="1"/><rect x="1011" y="331" width="1" height="1"/><rect x="1013" y="331" width="1" height="1"/><rect x="1014" y="331" width="1" height="1"/><rect x="1015" y="331" width="1" height="1"/><rect x="1010" y="332" width="1" height="1"/><rect x="1011" y="332" width="1" height="1"/><rect x="1012" y="332" width="1" height="1"/><rect x="1013" y="332" width="1" height="1"/><rect x="1014" y="332" width="1" height="1"/><rect x="1011" y="333" width="1" height="1"/><rect x="1012" y="333" width="1" height="1"/><rect x="1013" y="333" width="1" height="1"/><rect x="1012" y="334" width="1" height="1"/><rect x="1016" y="348" width="1" height="1"/><rect x="1015" y="349" width="1" height="1"/><rect x="1016" y="349" width="1" height="1"/><rect x="1010" y="350" width="1" height="1"/><rect x="1014" y="350" width="1" height="1"/><rect x="1015" y="350" width="1" height="1"/><rect x="1016" y="350" width="1" height="1"/><rect x="1010" y="351" width="1" height="1"/><rect x="1011" y="351" width="1" height="1"/><rect x="1013" y="351" width="1" height="1"/><rect x="1014" y="351" width="1" height="1"/><rect x="1015" y="351" width="1" height="1"/><rect x="1010" y="352" width="1" height="1"/><rect x="1011" y="352" width="1" height="1"/><rect x="1012" y="352" width="1" height="1"/><rect x="1013" y="352" width="1" height="1"/><rect x="1014" y="352" width="1" height="1"/><rect x="1011" y="353" width="1" height="1"/><rect x="1012" y="353" width="1" height="1"/><rect x="1013" y="353" width="1" height="1"/><rect x="1012" y="354" width="1" height="1"/><rect x="1016" y="368" width="1" height="1"/><rect x="1015" y="369" width="1" height="1"/><rect x="1016" y="369" width="1" height="1"/><rect x="1010" y="370" width="1" height="1"/><rect x="1014" y="370" width="1" height="1"/><rect x="1015" y="370" width="1" height="1"/><rect x="1016" y="370" width="1" height="1"/><rect x="1010" y="371" width="1" height="1"/><rect x="1011" y="371" width="1" height="1"/><rect x="1013" y="371" width="1" height="1"/><rect x="1014" y="371" width="1" height="1"/><rect x="1015" y="371" width="1" height="1"/><rect x="1010" y="372" width="1" height="1"/><rect x="1011" y="372" width="1" height="1"/><rect x="1012" y="372" width="1" height="1"/><rect x="1013" y="372" width="1" height="1"/><rect x="1014" y="372" width="1" height="1"/><rect x="1011" y="373" width="1" height="1"/><rect x="1012" y="373" width="1" height="1"/><rect x="1013" y="373" width="1" height="1"/><rect x="1012" y="374" width="1" height="1"/></svg>
<svg class="a" style="left:0;top:0" width="1184" height="430" shape-rendering="crispEdges"><rect x="578" y="98" width="1" height="1" fill="#8c8c8c"/><rect x="925" y="99" width="1" height="1" fill="#000"/><rect x="577" y="99" width="1" height="1" fill="#8c8c8c"/><rect x="924" y="100" width="1" height="1" fill="#000"/><rect x="578" y="99" width="1" height="1" fill="#8c8c8c"/><rect x="925" y="100" width="1" height="1" fill="#000"/><rect x="572" y="100" width="1" height="1" fill="#8c8c8c"/><rect x="919" y="101" width="1" height="1" fill="#000"/><rect x="576" y="100" width="1" height="1" fill="#8c8c8c"/><rect x="923" y="101" width="1" height="1" fill="#000"/><rect x="577" y="100" width="1" height="1" fill="#8c8c8c"/><rect x="924" y="101" width="1" height="1" fill="#000"/><rect x="578" y="100" width="1" height="1" fill="#8c8c8c"/><rect x="925" y="101" width="1" height="1" fill="#000"/><rect x="572" y="101" width="1" height="1" fill="#8c8c8c"/><rect x="919" y="102" width="1" height="1" fill="#000"/><rect x="573" y="101" width="1" height="1" fill="#8c8c8c"/><rect x="920" y="102" width="1" height="1" fill="#000"/><rect x="575" y="101" width="1" height="1" fill="#8c8c8c"/><rect x="922" y="102" width="1" height="1" fill="#000"/><rect x="576" y="101" width="1" height="1" fill="#8c8c8c"/><rect x="923" y="102" width="1" height="1" fill="#000"/><rect x="577" y="101" width="1" height="1" fill="#8c8c8c"/><rect x="924" y="102" width="1" height="1" fill="#000"/><rect x="572" y="102" width="1" height="1" fill="#8c8c8c"/><rect x="919" y="103" width="1" height="1" fill="#000"/><rect x="573" y="102" width="1" height="1" fill="#8c8c8c"/><rect x="920" y="103" width="1" height="1" fill="#000"/><rect x="574" y="102" width="1" height="1" fill="#8c8c8c"/><rect x="921" y="103" width="1" height="1" fill="#000"/><rect x="575" y="102" width="1" height="1" fill="#8c8c8c"/><rect x="922" y="103" width="1" height="1" fill="#000"/><rect x="576" y="102" width="1" height="1" fill="#8c8c8c"/><rect x="923" y="103" width="1" height="1" fill="#000"/><rect x="573" y="103" width="1" height="1" fill="#8c8c8c"/><rect x="920" y="104" width="1" height="1" fill="#000"/><rect x="574" y="103" width="1" height="1" fill="#8c8c8c"/><rect x="921" y="104" width="1" height="1" fill="#000"/><rect x="575" y="103" width="1" height="1" fill="#8c8c8c"/><rect x="922" y="104" width="1" height="1" fill="#000"/><rect x="574" y="104" width="1" height="1" fill="#8c8c8c"/><rect x="921" y="105" width="1" height="1" fill="#000"/></svg>
</body></html>
